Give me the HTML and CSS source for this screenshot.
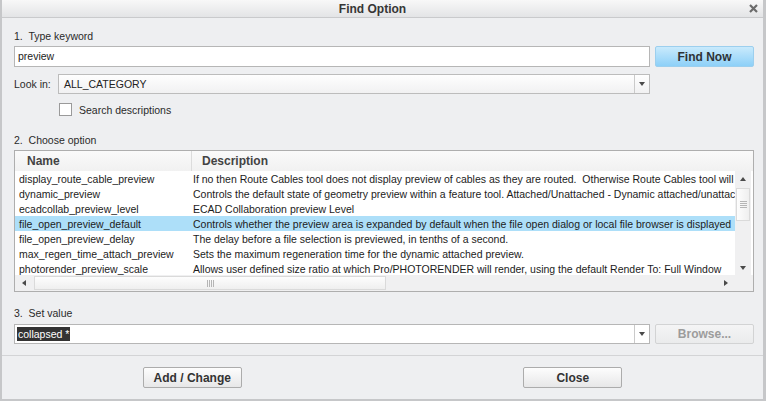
FILE: index.html
```html
<!DOCTYPE html>
<html>
<head>
<meta charset="utf-8">
<link rel="stylesheet" href="styles.css">
</head>
<body>
<div class="window">
  <div class="titlebar">
    <div class="title">Find Option</div>
    <div class="close">
      <svg width="9" height="9" viewBox="0 0 9 9"><path d="M1 1 L8 8 M8 1 L1 8" stroke="#6b6b6b" stroke-width="2.2" fill="none"/></svg>
    </div>
  </div>
  <div class="content">
    <div class="label">1.&nbsp; Type keyword</div>
    <div class="row keyword-row">
      <div class="textbox">preview</div>
      <button class="btn btn-primary">Find Now</button>
    </div>
    <div class="row lookin-row">
      <span class="lookin-label">Look in:</span>
      <div class="combo lookin-combo">
        <span class="combo-text">ALL_CATEGORY</span>
        <span class="combo-arrow"><span class="tri-down"></span></span>
      </div>
    </div>
    <div class="checkrow">
      <span class="checkbox"></span>
      <span class="check-label">Search descriptions</span>
    </div>
    <div class="label label-2">2.&nbsp; Choose option</div>
    <div class="listbox">
      <div class="lb-header">
        <div class="h-name">Name</div>
        <div class="h-desc">Description</div>
      </div>
      <div class="lb-body">
        <div class="rows">
          <div class="lb-row"><span class="c1">display_route_cable_preview</span><span class="c2">If no then Route Cables tool does not display preview of cables as they are routed.  Otherwise Route Cables tool will display preview of cables.</span></div>
          <div class="lb-row"><span class="c1">dynamic_preview</span><span class="c2">Controls the default state of geometry preview within a feature tool. Attached/Unattached - Dynamic attached/unattached preview.</span></div>
          <div class="lb-row"><span class="c1">ecadcollab_preview_level</span><span class="c2">ECAD Collaboration preview Level</span></div>
          <div class="lb-row selected"><span class="c1">file_open_preview_default</span><span class="c2">Controls whether the preview area is expanded by default when the file open dialog or local file browser is displayed</span></div>
          <div class="lb-row"><span class="c1">file_open_preview_delay</span><span class="c2">The delay before a file selection is previewed, in tenths of a second.</span></div>
          <div class="lb-row"><span class="c1">max_regen_time_attach_preview</span><span class="c2">Sets the maximum regeneration time for the dynamic attached preview.</span></div>
          <div class="lb-row"><span class="c1">photorender_preview_scale</span><span class="c2">Allows user defined size ratio at which Pro/PHOTORENDER will render, using the default Render To: Full Window</span></div>
        </div>
        <div class="vscroll">
          <div class="sb-btn"><span class="tri-up"></span></div>
          <div class="vtrack">
            <div class="vthumb"><span class="grip-h"></span><span class="grip-h"></span><span class="grip-h"></span><span class="grip-h"></span></div>
          </div>
          <div class="sb-btn"><span class="tri-down"></span></div>
        </div>
      </div>
      <div class="lb-foot">
        <div class="hscroll">
          <div class="sb-btn-h"><span class="tri-left"></span></div>
          <div class="htrack">
            <div class="hthumb"><span class="grip-v"></span><span class="grip-v"></span><span class="grip-v"></span><span class="grip-v"></span></div>
          </div>
          <div class="sb-btn-h"><span class="tri-right"></span></div>
        </div>
        <div class="corner"></div>
      </div>
    </div>
    <div class="label label-3">3.&nbsp; Set value</div>
    <div class="row value-row">
      <div class="combo value-combo">
        <span class="combo-text"><span class="sel-text">collapsed *</span></span>
        <span class="combo-arrow"><span class="tri-down"></span></span>
      </div>
      <button class="btn btn-disabled">Browse...</button>
    </div>
  </div>
  <div class="footer">
    <button class="btn foot-btn">Add / Change</button>
    <button class="btn foot-btn">Close</button>
  </div>
</div>
</body>
</html>
```
FILE: styles.css
```css
body {
  margin: 0;
  font-family: "Liberation Sans", Arial, sans-serif;
  font-size: 10.5px;
  color: #1c1c1c;
}

.window {
  width: 766px;
  height: 401px;
  box-sizing: border-box;
  background: #eeeff1;
  border-left: 2px solid #c6c7c9;
  border-right: 3px solid #c6c7c9;
  border-bottom: 2px solid #c6c7c9;
  display: flex;
  flex-direction: column;
}

.titlebar {
  height: 17px;
  border-bottom: 1px solid #c9cacc;
  background: linear-gradient(#f8f8f8, #e3e4e6);
  display: flex;
  align-items: center;
}

.title {
  flex: 1;
  text-align: center;
  font-weight: bold;
  font-size: 12px;
  color: #363636;
}

.close {
  width: 20px;
  height: 17px;
  display: flex;
  align-items: center;
  justify-content: center;
}

.close svg { display: block; }

.content {
  padding: 11px 9px 0 12px;
}

.label {
  height: 14px;
  line-height: 14px;
  color: #2a2a2a;
}

.label-2 { margin-top: 17px; }
.label-3 { margin-top: 14px; }

.row {
  display: flex;
  gap: 5px;
}

.keyword-row {
  margin-top: 3px;
  height: 21px;
}

.textbox {
  flex: 1;
  box-sizing: border-box;
  border: 1px solid #b6b6b6;
  background: #fff;
  padding-left: 3px;
  line-height: 19px;
}

.btn {
  width: 99px;
  height: 21px;
  box-sizing: border-box;
  font-family: "Liberation Sans", Arial, sans-serif;
  font-weight: bold;
  font-size: 12px;
  color: #333;
  border: 1px solid #acacac;
  border-radius: 2px;
  background: linear-gradient(#fdfdfd, #e7e7e8);
  padding: 0;
}

.btn-primary {
  background: linear-gradient(#c9eafc, #8dd0f8);
  border-color: #9ccfee;
  color: #2e3236;
}

.btn-disabled {
  height: 20px;
  color: #9c9c9c;
  background: linear-gradient(#f4f4f5, #eaebec);
  border-color: #d2d3d4;
}

.lookin-row {
  margin-top: 7px;
  height: 20px;
  gap: 0;
}

.lookin-label {
  width: 44px;
  line-height: 20px;
  color: #2a2a2a;
}

.combo {
  flex: 1;
  box-sizing: border-box;
  display: flex;
  border: 1px solid #bcbcbc;
  background: linear-gradient(#fefefe, #f1f1f2);
}

.lookin-combo {
  margin-right: 104px;
}

.combo-text {
  flex: 1;
  padding-left: 5px;
  line-height: 18px;
  color: #222;
}

.combo-arrow {
  width: 14px;
  border-left: 1px solid #cacaca;
  display: flex;
  align-items: center;
  justify-content: center;
}

.tri-down {
  width: 0;
  height: 0;
  border-left: 3.5px solid transparent;
  border-right: 3.5px solid transparent;
  border-top: 4px solid #4a4a4a;
}

.tri-up {
  width: 0;
  height: 0;
  border-left: 3.5px solid transparent;
  border-right: 3.5px solid transparent;
  border-bottom: 4px solid #4a4a4a;
}

.tri-left {
  width: 0;
  height: 0;
  border-top: 3.5px solid transparent;
  border-bottom: 3.5px solid transparent;
  border-right: 4px solid #4a4a4a;
}

.tri-right {
  width: 0;
  height: 0;
  border-top: 3.5px solid transparent;
  border-bottom: 3.5px solid transparent;
  border-left: 4px solid #4a4a4a;
}

.checkrow {
  margin-top: 9px;
  height: 13px;
  display: flex;
  align-items: center;
  padding-left: 45px;
}

.checkbox {
  width: 13px;
  height: 13px;
  box-sizing: border-box;
  border: 1px solid #9a9a9a;
  background: #fff;
}

.check-label {
  margin-left: 7px;
  color: #2a2a2a;
}

.listbox {
  margin-top: 3px;
  height: 142px;
  box-sizing: border-box;
  border: 1px solid #aeaeae;
  background: #fff;
  display: flex;
  flex-direction: column;
}

.lb-header {
  height: 20px;
  display: grid;
  grid-template-columns: 177px 1fr;
  background: linear-gradient(#fafafa, #f1f1f1);
  font-weight: bold;
  font-size: 12px;
  color: #434343;
  line-height: 20px;
}

.h-name {
  padding-left: 12px;
  border-right: 1px solid #dcdcdc;
}

.h-desc {
  padding-left: 10px;
}

.lb-body {
  height: 104px;
  display: flex;
}

.rows {
  width: 720px;
  height: 104px;
  overflow: hidden;
}

.lb-row {
  height: 15px;
  line-height: 16px;
  display: grid;
  grid-template-columns: 177px 543px;
  white-space: pre;
  color: #1c1c1c;
}

.lb-row.selected {
  background: #addff9;
}

.c1 {
  padding-left: 4px;
  overflow: hidden;
}

.c2 {
  padding-left: 1px;
  overflow: hidden;
}

.vscroll {
  width: 16px;
  display: flex;
  flex-direction: column;
  background: #f0f0f1;
}

.sb-btn {
  height: 15px;
  display: flex;
  align-items: center;
  justify-content: center;
}

.vtrack {
  flex: 1;
  padding-top: 2px;
}

.vthumb {
  height: 33px;
  margin: 0 1px;
  box-sizing: border-box;
  border: 1px solid #dadada;
  background: linear-gradient(90deg, #fdfdfd, #efefef);
  display: flex;
  flex-direction: column;
  align-items: center;
  justify-content: center;
  gap: 1px;
}

.grip-h {
  width: 7px;
  height: 1px;
  background: #b5b5b5;
}

.lb-foot {
  height: 16px;
  display: flex;
}

.hscroll {
  width: 720px;
  display: flex;
  background: #f0f0f1;
}

.sb-btn-h {
  width: 18px;
  display: flex;
  align-items: center;
  justify-content: center;
}

.htrack {
  flex: 1;
  padding-left: 1px;
  display: flex;
}

.hthumb {
  width: 352px;
  margin: 1px 0;
  box-sizing: border-box;
  border: 1px solid #dadada;
  background: linear-gradient(#fdfdfd, #efefef);
  display: flex;
  align-items: center;
  justify-content: center;
  gap: 1px;
}

.grip-v {
  width: 1px;
  height: 7px;
  background: #b5b5b5;
}

.corner {
  flex: 1;
  background: #f0f0f1;
}

.value-row {
  margin-top: 4px;
  height: 20px;
}

.value-combo {
  background: #fff;
  border-color: #b6b6b6;
}

.value-combo .combo-text {
  padding-left: 2px;
  display: flex;
  align-items: center;
}

.sel-text {
  background: #333333;
  color: #fff;
  line-height: 14px;
  padding: 0 1px;
}

.footer {
  margin-top: 11px;
  border-top: 1px solid #d3d4d6;
  padding-top: 11px;
  display: grid;
  grid-template-columns: 1fr 1fr;
  justify-items: center;
}

.foot-btn {
  height: 21px;
}
```
